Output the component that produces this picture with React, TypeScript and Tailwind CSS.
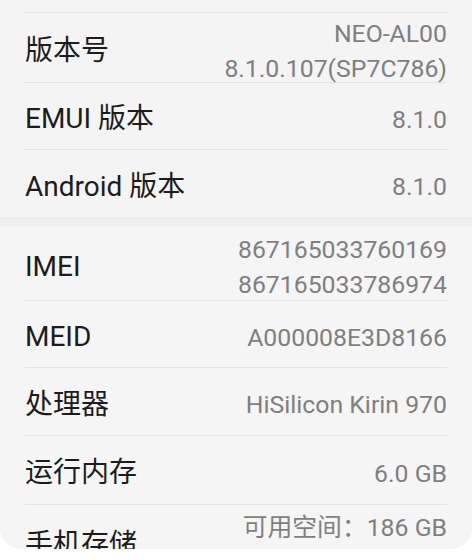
const font = { fontFamily: "Roboto, 'Noto Sans CJK SC', sans-serif" };

interface Row {
  label: string;
  values: string[];
  height: string;
  last?: boolean;
}

const sectionA: Row[] = [
  { label: "版本号", values: ["NEO-AL00", "8.1.0.107(SP7C786)"], height: "h-[70px]" },
  { label: "EMUI 版本", values: ["8.1.0"], height: "h-[67px]" },
  { label: "Android 版本", values: ["8.1.0"], height: "h-[67px]", last: true },
];

const sectionB: Row[] = [
  { label: "IMEI", values: ["867165033760169", "867165033786974"], height: "h-[74px]" },
  { label: "MEID", values: ["A000008E3D8166"], height: "h-[67px]" },
  { label: "处理器", values: ["HiSilicon Kirin 970"], height: "h-[68px]" },
  { label: "运行内存", values: ["6.0 GB"], height: "h-[69px]" },
  { label: "手机存储", values: ["可用空间：186 GB", "总容量：256 GB"], height: "h-[74px]", last: true },
];

function InfoRow({ row }: { row: Row }) {
  return (
    <div className="px-[25px]">
      <div
        className={`flex items-center justify-between pt-[6px] ${row.height} ${
          row.last ? "" : "border-b border-[#e3e3e3]"
        }`}
      >
        <span className="text-[28px] text-[#1c1c1c] leading-none">{row.label}</span>
        <div className="flex flex-col items-end text-[24.8px] leading-[35px] text-[#7f7f7f]">
          {row.values.map((v) => (
            <span key={v}>{v}</span>
          ))}
        </div>
      </div>
    </div>
  );
}

export default function App() {
  return (
    <div className="w-[472px] h-[560px] bg-white overflow-hidden" style={font}>
      <div className="h-[549px] bg-[#f4f4f4] rounded-b-[22px] overflow-hidden">
        <div className="px-[25px]">
          <div className="h-[13px] border-b border-[#e3e3e3]" />
        </div>
        {sectionA.map((r) => (
          <InfoRow key={r.label} row={r} />
        ))}
        <div className="h-[10px] bg-gradient-to-b from-[#ececec] to-[#f1f1f1]" />
        <div className="bg-[#f5f5f5]">
          {sectionB.map((r) => (
            <InfoRow key={r.label} row={r} />
          ))}
        </div>
      </div>
    </div>
  );
}
